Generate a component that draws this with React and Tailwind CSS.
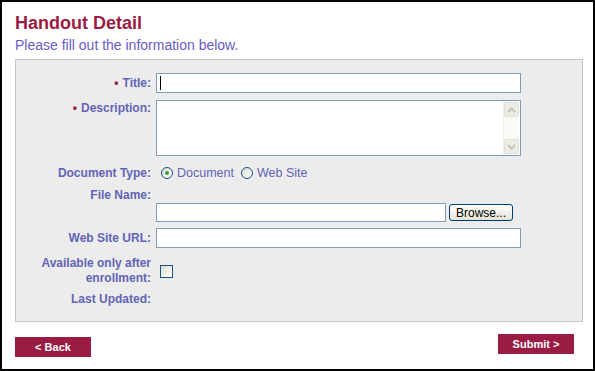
import React from 'react';

const labelCls = 'w-[135px] shrink-0 text-right text-[12px] font-bold text-[#6264b6] leading-[14px]';

function Bullet() {
  return <span className="text-[#9b1c42] mr-[4px]">•</span>;
}

function Radio({ checked }) {
  return (
    <span className="w-[12px] h-[12px] rounded-full border border-[#1c5180] bg-gradient-to-br from-[#dcdcd6] to-white flex items-center justify-center">
      {checked && <span className="w-[4px] h-[4px] rounded-full bg-[#2fa82f]" />}
    </span>
  );
}

function Chevron({ up }) {
  return (
    <svg width="9" height="6" viewBox="0 0 9 6">
      <path d={up ? 'M1 5 L4.5 1.5 L8 5' : 'M1 1 L4.5 4.5 L8 1'} stroke="#c4c4ba" strokeWidth="2" fill="none" />
    </svg>
  );
}

export default function App() {
  return (
    <div className="w-[595px] h-[371px] bg-white border-t-2 border-l-2 border-r-2 border-b-2 border-black pl-[13px] pt-[10px] font-['Liberation_Sans',Arial,sans-serif]">
      <h1 className="text-[18px] leading-[22px] font-bold text-[#9b1c42]">Handout Detail</h1>
      <p className="mt-[3px] text-[14px] leading-[17px] text-[#6a5cc4]">Please fill out the information below.</p>

      <div className="mt-[5px] w-[568px] h-[263px] bg-[#ececec] border border-[#c6c6c6] pt-[13px] flex flex-col">
        <div className="flex items-center h-[20px]">
          <label className={labelCls}><Bullet />Title:</label>
          <div className="ml-[5px] w-[365px] h-[20px] bg-white border border-[#7f9db9] flex items-center pl-[3px]">
            <span className="w-px h-[14px] bg-black" />
          </div>
        </div>

        <div className="flex items-start mt-[7px] h-[56px]">
          <label className={labelCls + ' pt-px'}><Bullet />Description:</label>
          <div className="ml-[5px] w-[365px] h-[56px] bg-white border border-[#7f9db9] flex justify-end p-px">
            <div className="w-[16px] h-full bg-[#fbfbf6] border-l border-[#eeeee6] flex flex-col justify-between">
              <div className="h-[15px] rounded-[2px] bg-[#eeede5] border border-[#e0e0d8] flex items-center justify-center"><Chevron up /></div>
              <div className="h-[15px] rounded-[2px] bg-[#eeede5] border border-[#e0e0d8] flex items-center justify-center"><Chevron /></div>
            </div>
          </div>
        </div>

        <div className="flex items-center mt-[8px] h-[18px]">
          <label className={labelCls}>Document Type:</label>
          <div className="ml-[10px] flex items-center text-[12.5px] text-[#6264b6]">
            <Radio checked />
            <span className="ml-[4px]">Document</span>
            <span className="ml-[7px]"><Radio /></span>
            <span className="ml-[4px]">Web Site</span>
          </div>
        </div>

        <div className="flex items-center mt-[5px] h-[16px]">
          <label className={labelCls}>File Name:</label>
        </div>
        <div className="flex items-center h-[19px]">
          <div className="w-[135px] shrink-0" />
          <div className="ml-[5px] w-[290px] h-[19px] bg-white border border-[#7f9db9]" />
          <button className="ml-[3px] w-[64px] h-[17px] rounded-[3px] border border-[#003c74] bg-gradient-to-b from-white to-[#e6e3d6] text-[12px] leading-none text-black">Browse...</button>
        </div>

        <div className="flex items-center mt-[6px] h-[20px]">
          <label className={labelCls}>Web Site URL:</label>
          <div className="ml-[5px] w-[365px] h-[20px] bg-white border border-[#7f9db9]" />
        </div>

        <div className="flex items-center mt-[8px] h-[30px]">
          <label className={labelCls + ' leading-[15px]'}>Available only after<br />enrollment:</label>
          <span className="ml-[9px] w-[13px] h-[13px] border border-[#1c5180] bg-gradient-to-br from-[#dcdcd6] to-white" />
        </div>

        <div className="flex items-center mt-[6px] h-[14px]">
          <label className={labelCls}>Last Updated:</label>
        </div>
      </div>

      <div className="w-[559px] flex justify-between items-start">
        <button className="mt-[15px] w-[76px] h-[20px] bg-[#9b1c42] text-white text-[11px] font-bold">&lt; Back</button>
        <button className="mt-[12px] w-[76px] h-[20px] bg-[#9b1c42] text-white text-[11px] font-bold">Submit &gt;</button>
      </div>
    </div>
  );
}
